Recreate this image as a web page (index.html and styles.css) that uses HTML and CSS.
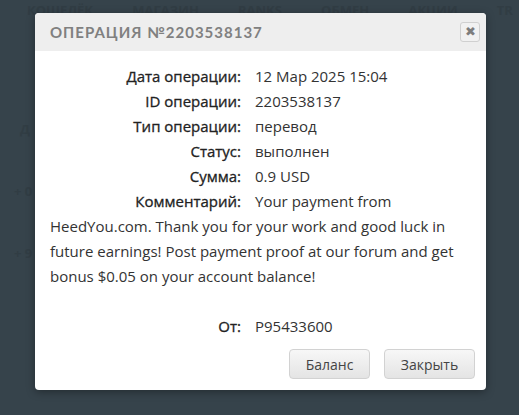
FILE: index.html
```html
<!DOCTYPE html>
<html lang="ru">
<head>
  <meta charset="UTF-8">
  <title>Операция №2203538137</title>
  <meta name="viewport" content="width=device-width, initial-scale=1.0">
  <link rel="stylesheet" href="styles.css">
</head>
<body>
  <div class="backdrop">
    <div class="bg-nav">
      <span>КОШЕЛЁК</span><span>МАГАЗИН</span><span>RANKS</span><span>ОБМЕН</span><span>АКЦИИ</span><span>TR</span>
    </div>
    <div class="bg-side">
      <span class="bg-h">Д</span>
      <span>+ 0</span>
      <span>+ 9</span>
    </div>
  </div>

  <div class="modal">
    <div class="modal-header">
      <h3>Операция №2203538137</h3>
      <button class="close" type="button">&#10006;</button>
    </div>
    <div class="modal-body">
      <div class="row"><span class="lbl">Дата операции:</span>12 Мар 2025 15:04</div>
      <div class="row"><span class="lbl">ID операции:</span>2203538137</div>
      <div class="row"><span class="lbl">Тип операции:</span>перевод</div>
      <div class="row"><span class="lbl">Статус:</span>выполнен</div>
      <div class="row"><span class="lbl">Сумма:</span>0.9 USD</div>
      <div class="row"><span class="lbl">Комментарий:</span>Your payment from HeedYou.com. Thank you for your work and good luck in future earnings! Post payment proof at our forum and get bonus $0.05 on your account balance!</div>
      <div class="row from"><span class="lbl">От:</span>P95433600</div>
    </div>
    <div class="modal-footer">
      <button class="btn" type="button">Баланс</button>
      <button class="btn" type="button">Закрыть</button>
    </div>
  </div>
</body>
</html>
```

FILE: styles.css
```css
body {
  margin: 0;
  background-color: #36434b;
  font-family: "Open Sans", "Liberation Sans", sans-serif;
  color: #333;
  height: 415px;
  overflow: hidden;
}
.backdrop {
  color: #313d44;
  font-weight: bold;
  font-size: 13px;
}
.bg-nav {
  display: flex;
  justify-content: space-between;
  padding: 0 6px 0 27px;
  line-height: 20px;
}
.bg-side {
  display: flex;
  flex-direction: column;
  padding-left: 14px;
}
.bg-side .bg-h {
  margin-top: 100px;
  padding-left: 6px;
}
.bg-side span {
  margin-top: 44px;
}
.modal {
  position: absolute;
  left: 35px;
  top: 13px;
  width: 451px;
  background-color: #fff;
  border-radius: 4px;
  box-shadow: 0 2px 8px rgba(0,0,0,0.35);
  overflow: hidden;
}
.modal-header {
  display: flex;
  align-items: center;
  justify-content: space-between;
  height: 38px;
  padding: 0 6px 0 15px;
  background-color: #eeeeee;
}
.modal-header h3 {
  margin: 0;
  font-family: "Lato", sans-serif;
  font-size: 15px;
  font-weight: bold;
  letter-spacing: 1px;
  text-transform: uppercase;
  color: #808080;
}
.close {
  width: 20px;
  height: 20px;
  padding: 0;
  border: 1px solid #d0d0d0;
  border-radius: 3px;
  background-color: #f1f1f1;
  color: #7d7d7d;
  font-size: 13px;
  line-height: 18px;
  cursor: pointer;
}
.modal-body {
  padding: 13px 15px 0 15px;
  font-size: 15px;
  line-height: 25px;
  color: #333;
}
.lbl {
  display: inline-block;
  width: 191px;
  margin-right: 14px;
  text-align: right;
  color: #222;
  -webkit-text-stroke: 0.3px #222;
}
.from {
  margin-top: 25px;
}
.modal-footer {
  display: flex;
  justify-content: flex-end;
  gap: 14px;
  padding: 10px 11px 11px 0;
}
.btn {
  height: 30px;
  padding: 0 10px;
  border: 1px solid #d2d2d2;
  border-radius: 4px;
  background: linear-gradient(#f7f7f7, #e4e4e4);
  font-family: "Open Sans", "Liberation Sans", sans-serif;
  font-size: 14px;
  color: #444;
  cursor: pointer;
}
.btn:first-child {
  width: 81px;
}
.btn:last-child {
  width: 91px;
}
```
